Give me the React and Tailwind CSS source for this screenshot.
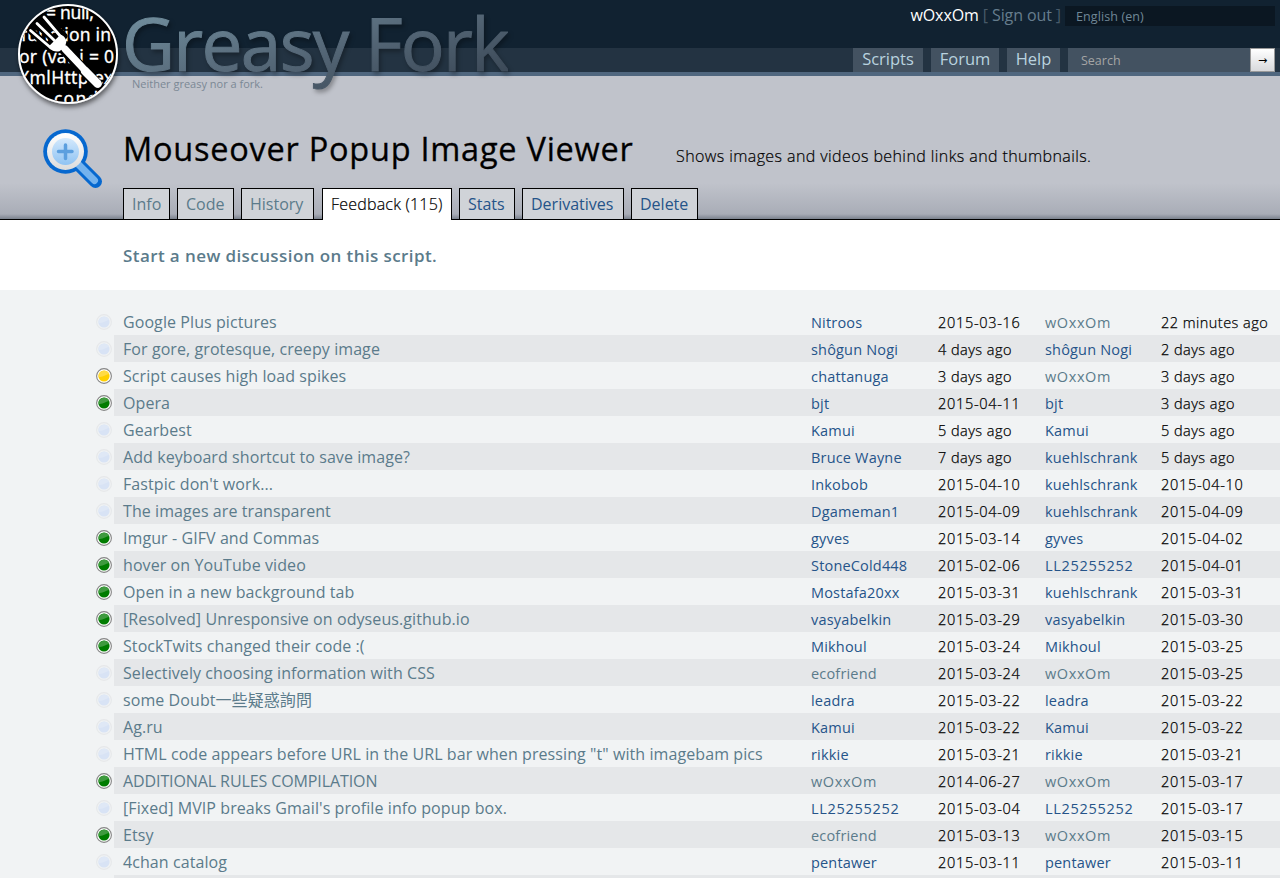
import React from "react";

const MUTED = "text-[#5b7b8b]";
const LINK = "text-[#255489]";

const rows = [
  ["none", "Google Plus pictures", "Nitroos", "2015-03-16", "wOxxOm", "22 minutes ago"],
  ["none", "For gore, grotesque, creepy image", "shôgun Nogi", "4 days ago", "shôgun Nogi", "2 days ago"],
  ["yellow", "Script causes high load spikes", "chattanuga", "3 days ago", "wOxxOm", "3 days ago"],
  ["green", "Opera", "bjt", "2015-04-11", "bjt", "3 days ago"],
  ["none", "Gearbest", "Kamui", "5 days ago", "Kamui", "5 days ago"],
  ["none", "Add keyboard shortcut to save image?", "Bruce Wayne", "7 days ago", "kuehlschrank", "5 days ago"],
  ["none", "Fastpic don't work...", "Inkobob", "2015-04-10", "kuehlschrank", "2015-04-10"],
  ["none", "The images are transparent", "Dgameman1", "2015-04-09", "kuehlschrank", "2015-04-09"],
  ["green", "Imgur - GIFV and Commas", "gyves", "2015-03-14", "gyves", "2015-04-02"],
  ["green", "hover on YouTube video", "StoneCold448", "2015-02-06", "LL25255252", "2015-04-01"],
  ["green", "Open in a new background tab", "Mostafa20xx", "2015-03-31", "kuehlschrank", "2015-03-31"],
  ["green", "[Resolved] Unresponsive on odyseus.github.io", "vasyabelkin", "2015-03-29", "vasyabelkin", "2015-03-30"],
  ["green", "StockTwits changed their code :(", "Mikhoul", "2015-03-24", "Mikhoul", "2015-03-25"],
  ["none", "Selectively choosing information with CSS", "ecofriend", "2015-03-24", "wOxxOm", "2015-03-25"],
  ["none", "some Doubt一些疑惑詢問", "leadra", "2015-03-22", "leadra", "2015-03-22"],
  ["none", "Ag.ru", "Kamui", "2015-03-22", "Kamui", "2015-03-22"],
  ["none", "HTML code appears before URL in the URL bar when pressing \"t\" with imagebam pics", "rikkie", "2015-03-21", "rikkie", "2015-03-21"],
  ["green", "ADDITIONAL RULES COMPILATION", "wOxxOm", "2014-06-27", "wOxxOm", "2015-03-17"],
  ["none", "[Fixed] MVIP breaks Gmail's profile info popup box.", "LL25255252", "2015-03-04", "LL25255252", "2015-03-17"],
  ["green", "Etsy", "ecofriend", "2015-03-13", "wOxxOm", "2015-03-15"],
  ["none", "4chan catalog", "pentawer", "2015-03-11", "pentawer", "2015-03-11"],
];

const visited = ["wOxxOm", "ecofriend"];

function Bullet({ kind }) {
  const fill = { green: "#007c00", yellow: "#ffd000", none: "#d8e3f5" }[kind];
  const top = { green: "#3f9a3f", yellow: "#ffdb45", none: "#dfe8f6" }[kind];
  const faint = kind === "none";
  return (
    <svg className="size-4 shrink-0" viewBox="0 0 16 16">
      <circle cx="8" cy="8" r="7.4" fill={faint ? "#f0f2f3" : "#fff"} stroke={faint ? "#e6e8ea" : "#858585"} strokeWidth="1.1" />
      <circle cx="8" cy="8" r="5.6" fill={fill} />
      <path d="M2.6 9.2A5.6 5.6 0 0 1 13.2 6Q11 6.2 9 7.6T2.6 9.2Z" fill={top} />
    </svg>
  );
}

function Logo() {
  return (
    <svg className="absolute left-[10px] top-0 h-[116px] w-[116px]" viewBox="10 0 116 116">
      <defs>
        <clipPath id="disc"><circle cx="68" cy="54" r="48" /></clipPath>
        <filter id="shade" x="-20%" y="-20%" width="140%" height="150%">
          <feDropShadow dx="1" dy="3" stdDeviation="2.5" floodColor="#000" floodOpacity=".55" />
        </filter>
      </defs>
      <circle cx="68" cy="54" r="49" fill="#000" stroke="#fff" strokeWidth="2" filter="url(#shade)" />
      <g clipPath="url(#disc)" fill="#fff" stroke="#fff" strokeWidth=".3" fontFamily="'Noto Sans', sans-serif" fontSize="17.500" fontWeight="400">
        <text x="46" y="19" textLength="48">= null,</text>
        <text x="21" y="41" textLength="90">function in</text>
        <text x="19" y="63" textLength="95">or (var i = 0</text>
        <text x="19" y="84" textLength="94">XmlHttp.ex</text>
        <text x="48" y="105" textLength="56">.condi</text>
      </g>
      <g stroke="#000" strokeWidth="7" fill="#000" strokeLinecap="round" strokeLinejoin="round">
        <path d="M31 31L52 50M37 24L57 43M44 17L64 36" />
        <path d="M60 45L97 84" strokeWidth="11" />
      </g>
      <g stroke="#fff" strokeLinecap="round" fill="none">
        <path d="M30.500 30.500L51 48M37 23.500L56 42M44 17L61 37" strokeWidth="2.8" />
        <path d="M50 47L61 36Q65 38 65 42L64 46L59 50Q54 51 50 47Z" fill="#fff" strokeWidth="2.500" strokeLinejoin="round" />
        <path d="M60 45L67 51" strokeWidth="5" />
        <path d="M65 49L98 84" strokeWidth="7" />
        <path d="M85 71L97.500 83.500" strokeWidth="8.500" />
      </g>
    </svg>
  );
}

function Magnifier() {
  return (
    <svg className="absolute left-[42px] top-[128px] size-16" viewBox="42 128 64 64">
      <defs>
        <linearGradient id="lens" x1="0" y1="0" x2="0" y2="1">
          <stop offset="0" stopColor="#d4e9fc" /><stop offset="1" stopColor="#8fc3f3" />
        </linearGradient>
        <linearGradient id="ring" x1="0" y1="0" x2="0" y2="1">
          <stop offset="0" stopColor="#fff" /><stop offset="1" stopColor="#dcdcdc" />
        </linearGradient>
      </defs>
      <path d="M79 165L95.500 181.500" stroke="#0668cf" strokeWidth="13" strokeLinecap="round" />
      <circle cx="65.500" cy="151.500" r="22.300" fill="#0668cf" />
      <path d="M77 163L94.500 180.500" stroke="#74b3ee" strokeWidth="7" strokeLinecap="round" />
      <circle cx="65.500" cy="151.500" r="18.500" fill="url(#ring)" />
      <circle cx="65.500" cy="151.500" r="13.500" fill="url(#lens)" />
      <path d="M65.500 145V158.500M58.500 151.500H72" stroke="#5b9fdf" strokeWidth="3.500" strokeLinecap="round" />
    </svg>
  );
}

function Tab({ label, width, active, seen = false }) {
  return (
    <a className={`flex shrink-0 whitespace-nowrap border border-black pl-2 text-[16px] leading-[30px] ${width} ${active ? "h-8 border-b-0 bg-white font-light tracking-[0.2px] text-black [-webkit-text-stroke:0.2px_black]" : `h-8 bg-[#d0d3d8] ${seen ? MUTED : LINK}`}`}>
      {label}
    </a>
  );
}

function Name({ name, width }) {
  const spacing = name.startsWith("LL") ? "tracking-[0.7px]" : name === "wOxxOm" ? "tracking-[0.6px]" : "tracking-[0.18px]";
  return <a className={`${width} ${spacing} ${visited.includes(name) ? MUTED : LINK}`}>{name}</a>;
}

function When({ value, width }) {
  return <span className={`font-light [-webkit-text-stroke:0.25px_black] ${width} ${value.includes("-") ? "tracking-[0.7px]" : "tracking-[0.47px]"}`}>{value}</span>;
}

function Header() {
  return (
    <header className="relative flex h-[76px] flex-col border-b-4 border-[#50677f] bg-[#112231]">
      <div className="flex h-12 items-start justify-end pr-[5px] pt-[6px]">
        <div className="mr-1 text-[16px] leading-[19px] tracking-[-0.1px] text-[#485a69]">
          <span className="text-white">wOxxOm</span> [ <span className="text-[#667d8d]">Sign out</span> ]
        </div>
        <div className="h-5 w-[210px] bg-[#0b1722] pl-[11px] text-[12.500px] leading-[21px] tracking-[0.1px] text-[#708797]">English (en)</div>
      </div>
      <nav className="flex h-6 justify-end bg-[#233342] pr-[5px] text-[16.500px] leading-[22px] text-[#b9d2df]">
        <a className="mr-2 w-[70px] bg-[#435261] text-center">Scripts</a>
        <a className="mr-2 w-[68px] bg-[#435261] text-center">Forum</a>
        <a className="mr-2 w-[53px] bg-[#435261] text-center">Help</a>
        <div className="w-[182px] bg-[#435261] pl-[13px] text-[12.500px] leading-[25px] text-[#a5a5a5]">Search</div>
        <button className="w-[25px] border border-[#999] bg-linear-to-b from-white to-[#d8d9dc] font-['DejaVu_Sans',sans-serif] text-[11px] leading-6 text-black">→</button>
      </nav>
      <div className="absolute left-[122px] top-[-6px] whitespace-nowrap bg-linear-to-br from-[#7898a7] via-[#586b7b] to-[#35414f] bg-clip-text text-[73px] leading-[98px] tracking-[-1.7px] text-transparent drop-shadow-[2px_3px_2px_rgba(0,0,0,0.3)] [-webkit-text-stroke:1px_transparent]">Greasy Fork</div>
      <div className="absolute left-[132px] top-[77px] whitespace-nowrap text-[11px] leading-[14px] text-[#7b8895]">Neither greasy nor a fork.</div>
      <Logo />
    </header>
  );
}

export default function App() {
  return (
    <div className="h-[878px] w-[1280px] overflow-hidden bg-[#f1f3f4] font-['Open_Sans','Noto_Sans_CJK_TC',sans-serif] font-normal text-black">
      <Header />
      <section className="flex h-[144px] flex-col justify-between border-b border-black bg-[linear-gradient(to_bottom,#c0c3cb_0,#c0c3cb_107px,#a9adb7_138px,#7b828e_143px)]">
        <Magnifier />
        <div className="flex h-[100px] items-start whitespace-nowrap pl-[123px] pt-[50px]">
          <h1 className="w-[553px] text-[32.500px] leading-[46px] tracking-[0.750px] [-webkit-text-stroke:0.3px_black]">Mouseover Popup Image Viewer</h1>
          <p className="pt-[18px] text-[16px] font-light leading-6 tracking-[0.41px] [-webkit-text-stroke:0.2px_black]">Shows images and videos behind links and thumbnails.</p>
        </div>
        <nav className="-mb-px flex h-8 gap-[7px] pl-[123px]">
          <Tab label="Info" width="w-[47px]" seen />
          <Tab label="Code" width="w-[57px]" seen />
          <div className="mr-px flex"><Tab label="History" width="w-[73px]" seen /></div>
          <Tab label="Feedback (115)" width="w-[130px]" active />
          <Tab label="Stats" width="w-[56px]" />
          <Tab label="Derivatives" width="w-[102px]" />
          <Tab label="Delete" width="w-[67px]" />
        </nav>
      </section>
      <section className="h-[70px] bg-white pl-[123px] pt-6">
        <a className="text-[17px] font-semibold leading-6 tracking-[0.410px] text-[#5b7b8b]">Start a new discussion on this script.</a>
      </section>
      <main className="pl-24 pt-[18px]">
        {rows.map(([kind, title, author, created, last, updated], i) => (
          <div key={i} className="flex h-[27px] items-center">
            <Bullet kind={kind} />
            <div className={`ml-0.5 flex h-[27px] flex-1 whitespace-nowrap pl-[9px] text-[14.500px] leading-[29px] ${i % 2 ? "bg-[#e5e7e9]" : ""}`}>
              <a className={`w-[688px] text-[16px] leading-[28px] ${title === title.toUpperCase() ? "tracking-[-0.1px]" : "tracking-[0.080px]"} ${MUTED}`}>{title}</a>
              <Name name={author} width="w-[127px]" />
              <When value={created} width="w-[107px]" />
              <Name name={last} width="w-[116px]" />
              <When value={updated} width="w-auto" />
            </div>
          </div>
        ))}
        <div className="ml-[18px] h-[27px] bg-[#e5e7e9]" />
      </main>
    </div>
  );
}
